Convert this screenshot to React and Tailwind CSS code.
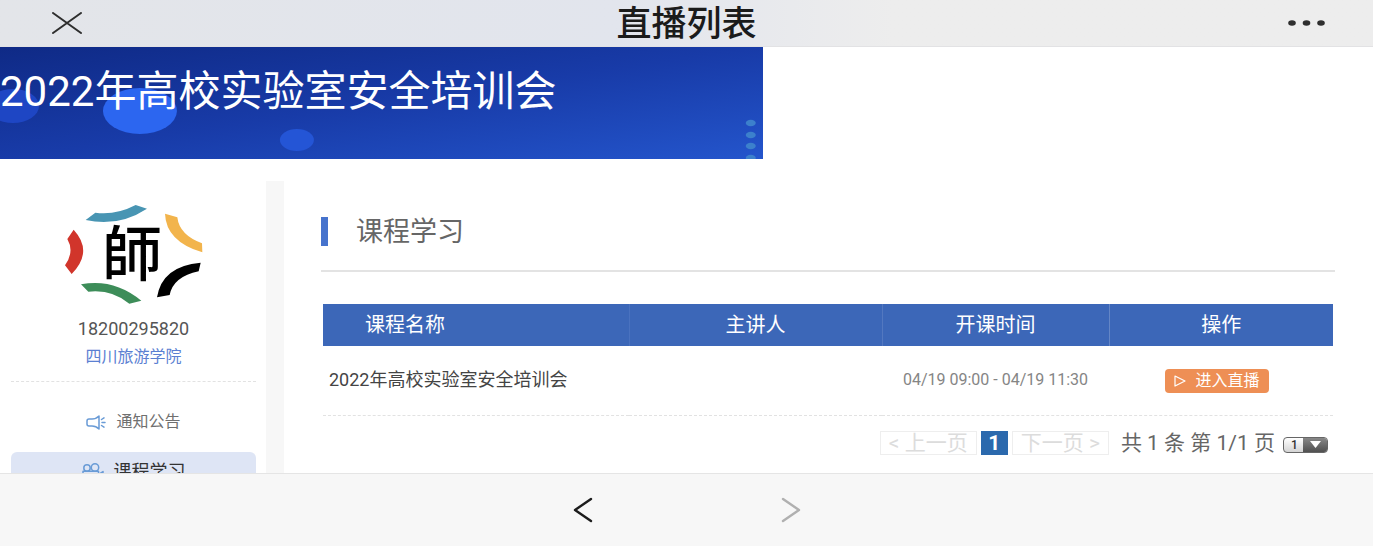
import React, { useState } from 'react';

const columns = [
    { title: '课程名称', className: 'w-[306px] pl-[42px] text-left' },
    { title: '主讲人', className: 'w-[253px] text-center border-l border-[#4a72bf]' },
    { title: '开课时间', className: 'w-[227px] text-center border-l border-[#5378c0]' },
    { title: '操作', className: 'w-[224px] text-center border-l border-[#6486c6]' },
];

const courses = [
    { id: 1, name: '2022年高校实验室安全培训会', speaker: '', time: '04/19 09:00 - 04/19 11:30' },
];

// School emblem
const SchoolLogo = () => (
    <svg viewBox="75 75 414 300" className="w-[138px] h-[100px]" role="img" aria-label="四川旅游学院">
        <path d="M137 120 L166 98 Q228 106 287 75 L321 86 Q235 142 137 120Z" fill="#4895b3" />
        <path d="M375 101 L412 112 Q418 165 486 190 L487 217 Q378 184 375 101Z" fill="#f2b44c" />
        <path d="M101 149 L82 177 Q104 215 75 256 L95 282 Q161 215 101 149Z" fill="#d1352b" />
        <path d="M123 313 L145 335 Q215 327 268 371 L304 362 Q221 294 123 313Z" fill="#3d8d59" />
        <path d="M482 248 L476 274 Q400 290 389 345 L351 352 Q366 258 482 248Z" fill="#000" />
        <text x="276" y="289" textAnchor="middle" fontSize="180" className="font-['Noto_Sans_CJK_TC',sans-serif] font-medium">師</text>
    </svg>
);

const BannerArt = () => (
    <svg viewBox="0 0 763 112" preserveAspectRatio="none" className="absolute inset-0 w-full h-full" aria-hidden="true">
        <ellipse cx="13" cy="59" rx="26" ry="17" fill="#1e46c4" />
        <ellipse cx="140" cy="64" rx="37" ry="23" fill="#2c66f0" />
        <ellipse cx="297" cy="93" rx="17" ry="11" fill="#2455d6" />
        {[76, 88, 99, 111].map((cy) => (
            <ellipse key={cy} cx="751" cy={cy} rx="5" ry="3.3" fill="#3c80cc" />
        ))}
    </svg>
);

const HornIcon = () => (
    <svg viewBox="0 0 20 15" className="w-5 h-[15px]" fill="none" stroke="#699bd6" strokeWidth="1.5" strokeLinejoin="round" strokeLinecap="round" aria-hidden="true">
        <path d="M13 1 Q10 4 6 4 H3 Q1 4 1 6 V9 Q1 11 3 11 H6 Q10 11 13 14Z" />
        <path d="M15.500 4.500 L18 2.800 M16 7.500 H19 M15.500 10.500 L18 12.200" />
    </svg>
);

const CameraIcon = () => (
    <svg viewBox="0 0 22 18" className="w-[22px] h-[18px]" fill="none" stroke="#699bd6" strokeWidth="1.5" strokeLinejoin="round" aria-hidden="true">
        <circle cx="5" cy="5" r="3.200" />
        <circle cx="13" cy="4.500" r="3.700" />
        <path d="M1 17 V8.200 H16.500 V17Z" />
        <path d="M16.500 11.500 L21 8.500 V16 L16.500 13.500" />
    </svg>
);

const TopBar = () => (
    <header className="shrink-0 h-[47px] border-b border-[#e2e2e4] bg-linear-to-r from-[#e3e5e9] from-0% via-[#e2e5ed] via-45% to-[#ededed] to-65% grid grid-cols-3 items-center px-12">
        <button type="button" aria-label="关闭" className="justify-self-start px-1">
            <svg viewBox="0 0 30 22" className="w-[30px] h-[22px]" stroke="#2e2e2e" strokeWidth="2" strokeLinecap="round">
                <path d="M1 1 L29 21 M29 1 L1 21" />
            </svg>
        </button>
        <h1 className="pt-1 text-center text-[35px] leading-[42px] font-medium text-[#1b1b1b] whitespace-nowrap">直播列表</h1>
        <button type="button" aria-label="更多" className="justify-self-end">
            <svg viewBox="0 0 37 6" className="w-[37px] h-[6px]" fill="#2e2e2e">
                <ellipse cx="4" cy="3" rx="3.800" ry="2.700" />
                <ellipse cx="18.500" cy="3" rx="3.800" ry="2.700" />
                <ellipse cx="33" cy="3" rx="3.800" ry="2.700" />
            </svg>
        </button>
    </header>
);

const Sidebar = () => (
    <aside className="w-[284px] shrink-0 border-r-[18px] border-[#f7f7f7] pl-[11px] pr-[10px]">
        <div className="pt-6 pb-3 flex flex-col items-center border-b border-dashed border-[#e2e2e2]">
            <SchoolLogo />
            <p className="mt-3 text-lg leading-6 text-[#555]">18200295820</p>
            <a href="#school" className="mt-1 text-base leading-6 text-[#5b80d2]">四川旅游学院</a>
        </div>
        <nav className="pt-7">
            <a href="#notice" className="flex items-center justify-center gap-[10px] h-6 text-base text-[#707070]">
                <HornIcon />
                通知公告
            </a>
            <a href="#course" className="mt-[18px] flex items-center justify-center gap-[10px] h-10 rounded-md bg-[#dee5f5] text-lg text-[#333]">
                <CameraIcon />
                课程学习
            </a>
        </nav>
    </aside>
);

const CourseTable = () => (
    <table className="w-full table-fixed border-collapse">
        <thead>
            <tr className="h-[42px] bg-[#3c67b8] text-white">
                {columns.map((col) => (
                    <th key={col.title} className={`${col.className} text-xl leading-6 font-normal`}>{col.title}</th>
                ))}
            </tr>
        </thead>
        <tbody>
            {courses.map((course) => (
                <tr key={course.id} className="h-[69px] border-b border-dashed border-[#e2e2e2]">
                    <td className="pl-[6px] text-lg text-[#444] whitespace-nowrap">{course.name}</td>
                    <td>{course.speaker}</td>
                    <td className="text-center text-base text-[#858585] whitespace-nowrap">{course.time}</td>
                    <td className="text-center pr-2">
                        <button type="button" className="inline-flex items-center gap-[9px] h-6 px-[9px] rounded-[4px] bg-[#ee8f55] text-base text-white align-middle whitespace-nowrap">
                            <svg viewBox="0 0 12 12" className="w-3 h-3" fill="none" stroke="#fff" strokeWidth="1.2" strokeLinejoin="round" aria-hidden="true">
                                <path d="M1 1 L11 6 L1 11Z" />
                            </svg>
                            进入直播
                        </button>
                    </td>
                </tr>
            ))}
        </tbody>
    </table>
);

const Pagination = () => {
    const [page, setPage] = useState('1');

    return (
        <div className="mt-[15px] mr-[5px] flex items-center justify-end gap-1 text-[21px] leading-6 whitespace-nowrap">
            <button type="button" disabled className="h-6 px-2 border border-[#eee] text-[#dcdcdc] leading-[22px]">&lt; 上一页</button>
            <button type="button" className="h-6 w-[27px] bg-[#2b69ad] text-white font-bold leading-6">1</button>
            <button type="button" disabled className="h-6 px-2 border border-[#eee] text-[#dcdcdc] leading-[22px]">下一页 &gt;</button>
            <span className="ml-2 text-[#666]">共 1 条 第 1/1 页</span>
            <div className="relative ml-1 mt-1 h-4 w-[45px] rounded-[4px] overflow-hidden border border-[#666] bg-linear-to-b from-white to-[#d4d4d4]">
                <select
                    aria-label="页码"
                    value={page}
                    onChange={(e) => setPage(e.target.value)}
                    className="block w-full h-full appearance-none pl-[7px] text-xs leading-[14px] font-medium text-[#333]"
                >
                    <option value="1">1</option>
                </select>
                <span className="pointer-events-none absolute inset-y-0 right-0 w-6 flex items-center justify-center bg-linear-to-b from-[#888] to-[#505050]">
                    <svg viewBox="0 0 11 7" className="w-[11px] h-[7px]" fill="#fff" aria-hidden="true">
                        <path d="M0 0 H11 L5.500 7Z" />
                    </svg>
                </span>
            </div>
        </div>
    );
};

const BottomBar = () => (
    <footer className="shrink-0 h-[73px] border-t border-[#e5e5e5] bg-[#f7f7f7] flex items-center justify-center gap-[188px]">
        <button type="button" aria-label="后退">
            <svg viewBox="0 0 20 26" className="w-5 h-[26px]" fill="none" stroke="#1c1c1c" strokeWidth="2.400" strokeLinecap="round" strokeLinejoin="round">
                <path d="M18 2 L2 13 L18 24" />
            </svg>
        </button>
        <button type="button" aria-label="前进" disabled>
            <svg viewBox="0 0 20 26" className="w-5 h-[26px]" fill="none" stroke="#b0b0b0" strokeWidth="2.400" strokeLinecap="round" strokeLinejoin="round">
                <path d="M2 2 L18 13 L2 24" />
            </svg>
        </button>
    </footer>
);

const App = () => (
    <div className="h-screen flex flex-col bg-white overflow-hidden font-[Roboto,'Noto_Sans_CJK_SC',sans-serif]">
        <TopBar />
        <main className="flex-1 min-h-0 overflow-hidden flex flex-col">
            <div className="relative shrink-0 w-5/9 h-28 pt-5 bg-linear-to-br from-[#0f2a86] via-[#183ba8] to-[#2455cc]">
                <BannerArt />
                <h2 className="relative text-[42px] leading-[50px] font-normal text-white whitespace-nowrap">2022年高校实验室安全培训会</h2>
            </div>

            <div className="mt-[22px] flex-1 min-h-0 flex">
                <Sidebar />
                <section className="flex-1 min-w-0 pl-[37px] pr-[38px] pt-9">
                    <div className="pb-6 border-b-2 border-[#e3e3e3]">
                        <h3 className="h-[29px] border-l-[7px] border-[#4673cd] pl-7 text-[27px] leading-[30px] text-[#666]">课程学习</h3>
                    </div>
                    <div className="mt-8 px-[2px]">
                        <CourseTable />
                        <Pagination />
                    </div>
                </section>
            </div>
        </main>
        <BottomBar />
    </div>
);

export default App;
